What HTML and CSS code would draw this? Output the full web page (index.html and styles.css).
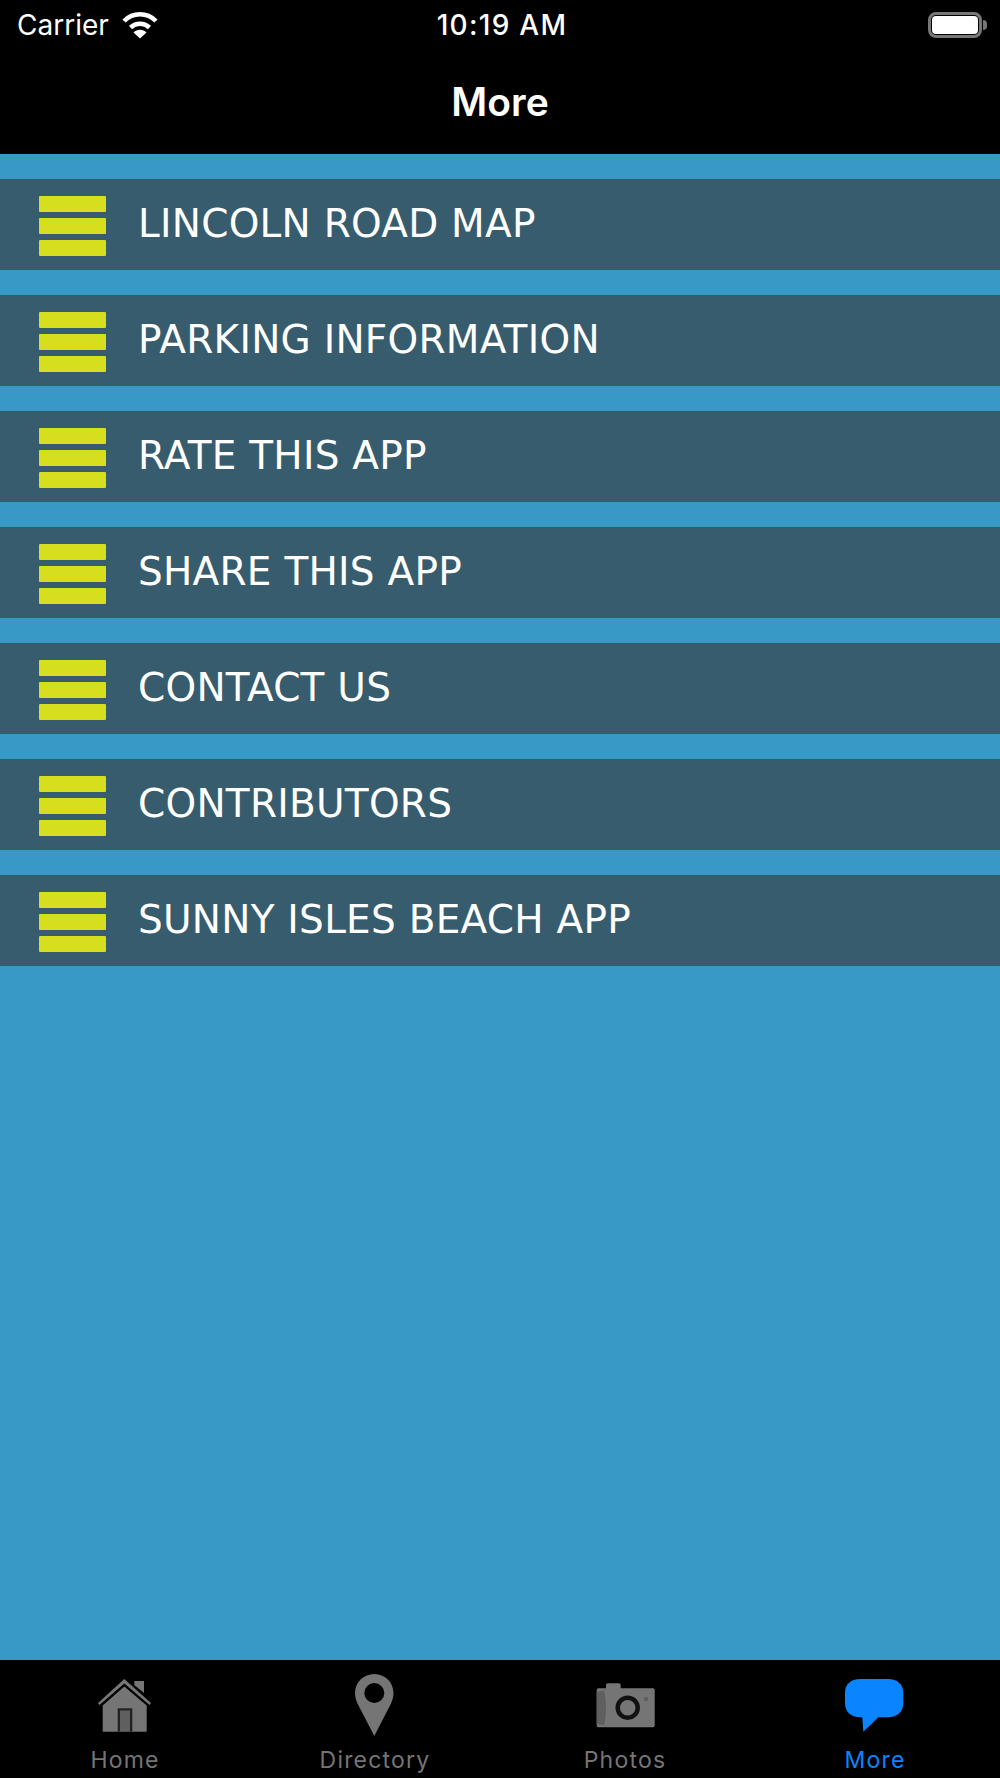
FILE: index.html
```html
<!DOCTYPE html>
<html lang="en">
  <head>
    <meta charset="UTF-8" />
    <meta name="viewport" content="width=device-width, initial-scale=1.0" />
    <title>More</title>
    <link rel="stylesheet" href="styles.css">
  </head>
  <body>
    <header class="top">
      <div class="status">
        <div class="status-left">
          <span class="carrier">Carrier</span>
          <svg class="wifi" viewBox="0 0 40 30">
            <path class="wifi-arc" d="M4 11 C13 2 27 2 36 11" />
            <path class="wifi-arc" d="M10.500 17.500 C16 12.500 24 12.500 29.500 17.500" />
            <path class="wifi-dot" d="M13.500 22.500 C17 18.800 23 18.800 26.500 22.500 L20 28.500 Z" />
          </svg>
        </div>
        <span class="time">10:19 AM</span>
        <div class="status-right">
          <div class="battery"><div class="battery-fill"></div></div>
          <div class="battery-nub"></div>
        </div>
      </div>
      <h1 class="title">More</h1>
    </header>

    <main class="list">
      <a class="row"><span class="bars"><i></i><i></i><i></i></span><span class="label">LINCOLN ROAD MAP</span></a>
      <a class="row"><span class="bars"><i></i><i></i><i></i></span><span class="label">PARKING INFORMATION</span></a>
      <a class="row"><span class="bars"><i></i><i></i><i></i></span><span class="label">RATE THIS APP</span></a>
      <a class="row"><span class="bars"><i></i><i></i><i></i></span><span class="label">SHARE THIS APP</span></a>
      <a class="row"><span class="bars"><i></i><i></i><i></i></span><span class="label">CONTACT US</span></a>
      <a class="row"><span class="bars"><i></i><i></i><i></i></span><span class="label">CONTRIBUTORS</span></a>
      <a class="row"><span class="bars"><i></i><i></i><i></i></span><span class="label">SUNNY ISLES BEACH APP</span></a>
    </main>

    <nav class="tabs">
      <a class="tab">
        <svg class="tab-icon" viewBox="0 0 64 72">
          <path class="grey" d="M41.300 13 H51 V25 L41.300 17 Z" />
          <path class="grey" d="M31.300 11 L58 35 L56.500 37 L31.300 15.500 L6.500 37 L5 35 Z" />
          <path class="grey" d="M31.300 18.500 L53.700 37.500 V63.700 H9.700 V37.500 Z" />
          <rect class="cut" x="24.700" y="40.300" width="14.600" height="23.400" />
          <rect class="door" x="27" y="42.500" width="10" height="21.200" />
        </svg>
        <span>Home</span>
      </a>
      <a class="tab">
        <svg class="tab-icon" viewBox="0 0 64 72">
          <path class="grey" fill-rule="evenodd" d="M31.300 6 C42 6 50.500 14.500 50.500 25 C50.500 29 49.500 32 48 35.500 L31.300 68 L14.500 35.500 C13 32 12 29 12 25 C12 14.500 20.500 6 31.300 6 Z M31.300 15 A10 10 0 1 0 31.300 35 A10 10 0 1 0 31.300 15 Z" />
        </svg>
        <span>Directory</span>
      </a>
      <a class="tab">
        <svg class="tab-icon" viewBox="0 0 64 72">
          <path class="grey" d="M13 20.300 V17 Q13 15.300 15 15.300 H25.700 Q27.700 15.300 27.700 17 V20.300 H60 Q61.700 20.300 61.700 22 V57.500 Q61.700 59.300 60 59.300 H5.500 Q3.700 59.300 3.700 57.500 V22 Q3.700 20.300 5.500 20.300 Z" />
          <path class="door" d="M3.700 24 L11 22.500 Q13 30 13 40 Q13 50 11 57 L3.700 56 Z" />
          <circle class="ring" cx="34.700" cy="39.700" r="10" />
          <circle class="door" cx="53" cy="31" r="2.200" />
        </svg>
        <span>Photos</span>
      </a>
      <a class="tab active">
        <svg class="tab-icon" viewBox="0 0 64 72">
          <path class="blue" d="M17 11 H45.300 C54 11 60.300 16 60.300 25 V35.300 C60.300 44 54 49.300 45.300 49.300 H35.300 L20.300 63.700 L19.300 49.300 H17 C8 49.300 2 44 2 35.300 V25 C2 16 8 11 17 11 Z" />
        </svg>
        <span>More</span>
      </a>
    </nav>
  </body>
</html>
```

FILE: styles.css
```css
html,
body {
  margin: 0;
  padding: 0;
}
body {
  width: 1000px;
  height: 1778px;
  display: flex;
  flex-direction: column;
  font-family: "Inter", "Liberation Sans", sans-serif;
  color: white;
  background-color: #3999c6;
  overflow: hidden;
}

/* status bar and title */
.top {
  height: 154px;
  background: #000;
  flex: none;
}
.status {
  height: 50px;
  display: grid;
  grid-template-columns: 1fr auto 1fr;
  align-items: center;
  padding: 0 13px 0 17px;
}
.status-left {
  display: flex;
  align-items: center;
  gap: 11px;
}
.carrier {
  font-size: 28px;
}
.wifi {
  width: 40px;
  height: 30px;
}
.wifi-arc {
  fill: none;
  stroke: white;
  stroke-width: 4.5;
}
.wifi-dot {
  fill: white;
}
.time {
  font-size: 28px;
  font-weight: 500;
  letter-spacing: 1.3px;
}
.status-right {
  display: flex;
  align-items: center;
  justify-content: flex-end;
  gap: 1px;
}
.battery {
  width: 46px;
  height: 18px;
  padding: 1px;
  border: 3px solid #777;
  border-radius: 8px;
}
.battery-fill {
  height: 100%;
  background: #fff;
  border-radius: 4px;
}
.battery-nub {
  width: 4px;
  height: 10px;
  background: #777;
  border-radius: 0 5px 5px 0;
}
.title {
  margin: 30px 0 0;
  font-size: 39px;
  font-weight: 600;
  line-height: 44px;
  text-align: center;
}

/* menu rows */
.list {
  flex: 1;
  display: flex;
  flex-direction: column;
  gap: 25px;
  padding-top: 25px;
}
.row {
  height: 91px;
  display: flex;
  align-items: center;
  gap: 32px;
  padding-left: 39px;
  background: #365c6e;
  font-family: "DejaVu Sans", sans-serif;
  font-size: 39px;
  letter-spacing: 0.25px;
}
.label {
  margin-bottom: 3px;
}
.bars {
  width: 67px;
  margin-top: 3px;
  display: flex;
  flex-direction: column;
  gap: 6px;
  filter: blur(0.7px);
}
.bars i {
  height: 16px;
  background: #d7de1e;
  border-radius: 1px;
}

/* tab bar */
.tabs {
  height: 118px;
  flex: none;
  display: grid;
  grid-template-columns: repeat(4, 1fr);
  background: #000;
}
.tab {
  display: flex;
  flex-direction: column;
  align-items: center;
  padding-top: 8px;
  color: #757575;
  font-size: 23px;
  letter-spacing: 1.2px;
}
.tab span {
  margin-top: 6px;
  line-height: 28px;
}
.tab.active {
  color: #0a84ff;
}
.tab-icon {
  width: 64px;
  height: 72px;
  filter: blur(0.4px);
}
.grey {
  fill: #757575;
}
.cut {
  fill: #222;
}
.door {
  fill: #5f5f5f;
}
.ring {
  fill: #757575;
  stroke: #111;
  stroke-width: 4.500;
}
.blue {
  fill: #0a84ff;
}
```
